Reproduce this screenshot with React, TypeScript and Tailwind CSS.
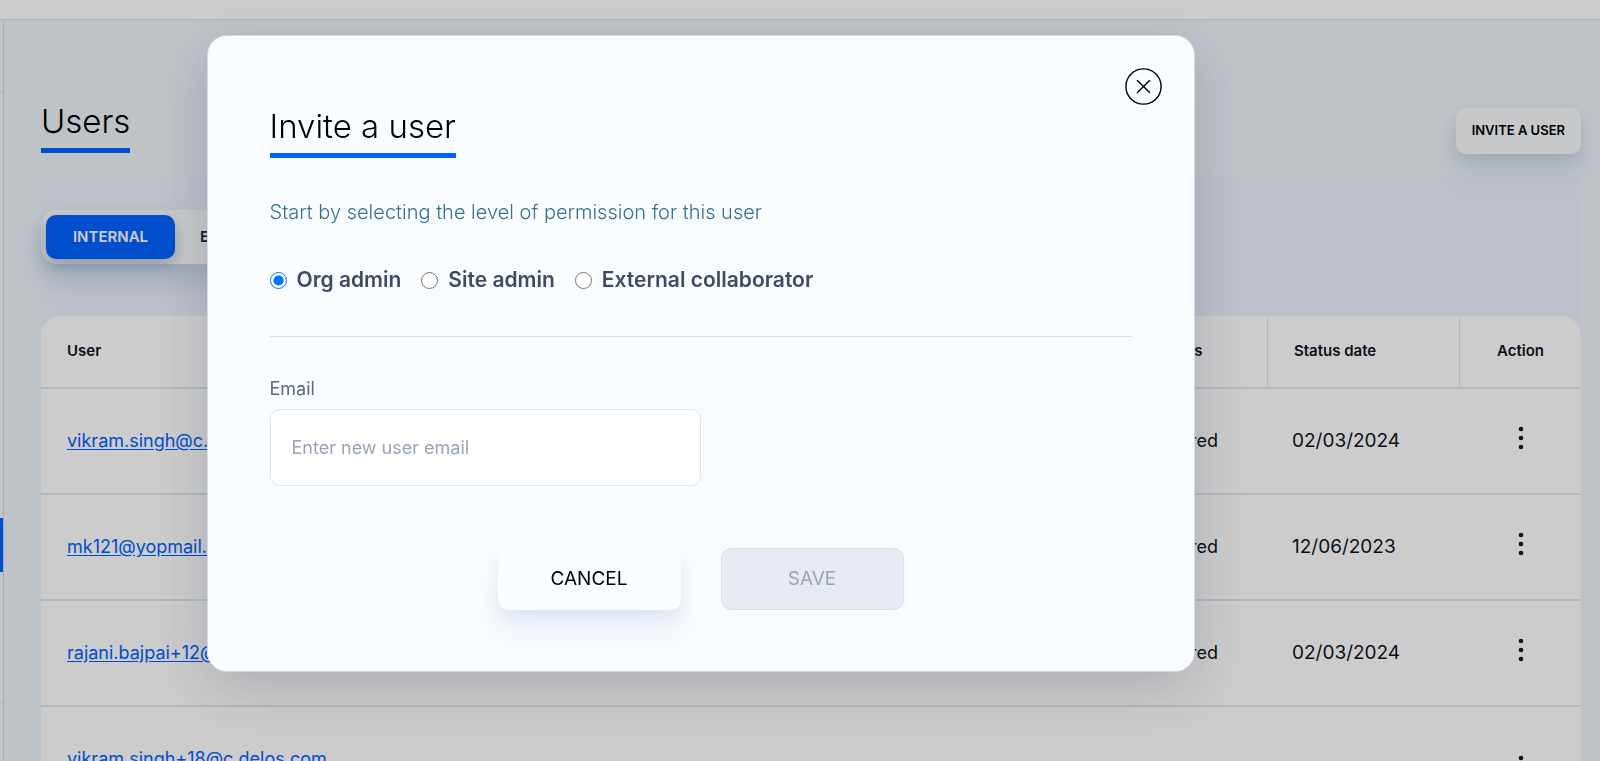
import { useState } from "react";

// Pending users have no status or date yet
const rows = [
  { email: "vikram.singh@c.delos.com", status: "Expired", date: "02/03/2024" },
  { email: "mk121@yopmail.com", status: "Expired", date: "12/06/2023" },
  { email: "rajani.bajpai+12@c.delos.com", status: "Expired", date: "02/03/2024" },
  { email: "vikram.singh+18@c.delos.com", status: "", date: "" },
];

const roles = ["Org admin", "Site admin", "External collaborator"];

function MoreIcon() {
  return (
    <svg width="6" height="24" viewBox="0 0 6 24" fill="currentColor">
      <circle cx="3" cy="3" r="2.3" />
      <circle cx="3" cy="12" r="2.3" />
      <circle cx="3" cy="21" r="2.3" />
    </svg>
  );
}

function Sidebar() {
  return (
    <aside className="flex w-1 shrink-0 flex-col border-r border-[#c8dcea] bg-[#f4f7fa]">
      <div className="h-[72px] border-b border-[#d5dfea] bg-[#eef5fa]" />
      <div className="h-[426px]" />
      <div className="h-[54px] bg-[#0062ff]" />
      <div className="h-[131px] border-b border-[#d5dfea]" />
    </aside>
  );
}

function UsersTable() {
  return (
    <table className="mt-[52px] w-full table-fixed border-separate border-spacing-0 overflow-hidden rounded-t-[20px] bg-white text-left text-[#10121f]">
      <colgroup>
        <col />
        <col className="w-[138px]" />
        <col className="w-[192px]" />
        <col className="w-[121px]" />
      </colgroup>
      <thead>
        <tr className="h-[73px] text-[15px]">
          <th className="border-b-2 border-[#dde6f0] px-[26px] font-semibold">User</th>
          <th className="border-r border-b-2 border-[#dde6f0] px-[26px] font-semibold">Status</th>
          <th className="border-r border-b-2 border-[#dde6f0] px-[26px] font-semibold">Status date</th>
          <th className="border-b-2 border-[#dde6f0] text-center font-semibold">Action</th>
        </tr>
      </thead>
      <tbody>
        {rows.map((row) => (
          <tr key={row.email} className="h-[106px] text-lg">
            <td className="border-b-2 border-[#dde6f0] px-[26px]">
              <a href="#" className="text-[#0062ff] underline underline-offset-2">
                {row.email}
              </a>
            </td>
            <td className="border-b-2 border-[#dde6f0] px-6">{row.status}</td>
            <td className="border-b-2 border-[#dde6f0] px-6 text-[19px]">{row.date}</td>
            <td className={row.status ? "border-b-2 border-[#dde6f0] pb-2 text-center" : "pt-3 text-center"}>
              <button aria-label="Actions" className="inline-flex align-middle">
                <MoreIcon />
              </button>
            </td>
          </tr>
        ))}
      </tbody>
    </table>
  );
}

function InviteModal() {
  const [role, setRole] = useState(roles[0]);
  const [email, setEmail] = useState("");

  return (
    <div className="fixed inset-0 flex items-start justify-center bg-black/20 pt-[35px] pr-[199px]">
      <div
        role="dialog"
        aria-labelledby="invite-title"
        className="relative w-full max-w-[988px] rounded-[20px] border border-[#cfdcec] bg-[#f9fcff] px-[62px] pt-[68px] pb-[61px] shadow-[0_16px_56px_rgba(30,35,60,0.18)]"
      >
        {/* Close */}
        <button aria-label="Close" className="absolute top-8 right-8 text-black">
          <svg width="37" height="37" viewBox="0 0 37 37" fill="none" stroke="currentColor" strokeWidth="1.4">
            <circle cx="18.5" cy="18.5" r="17.6" />
            <path d="M12.4 12.4l12.2 12.2M24.6 12.4L12.4 24.6" strokeLinecap="round" />
          </svg>
        </button>

        <h2
          id="invite-title"
          className="inline-block border-b-[5px] border-[#0062ff] pb-[5px] text-[33px] leading-[44px] font-light text-black"
        >
          Invite a user
        </h2>
        <p className="mt-10 text-xl leading-7 font-light text-[#39738f]">
          Start by selecting the level of permission for this user
        </p>

        {/* Roles */}
        <div className="mt-10 flex gap-5">
          {roles.map((item) => (
            <label key={item} className="flex items-center gap-[10px] text-[21px] leading-7 font-semibold text-[#414b66]">
              <input
                type="radio"
                name="role"
                checked={role === item}
                onChange={() => setRole(item)}
                className="size-[17px] accent-[#0075ff]"
              />
              {item}
            </label>
          ))}
        </div>

        <hr className="mt-[42px] border-[#d5e1ef]" />

        {/* Email */}
        <label htmlFor="email" className="mt-10 block text-lg leading-6 text-[#5d6884]">
          Email
        </label>
        <input
          id="email"
          type="email"
          value={email}
          onChange={(e) => setEmail(e.target.value)}
          placeholder="Enter new user email"
          className="mt-2 block h-[77px] w-1/2 rounded-[10px] border border-[#dfe5f0] bg-white px-[21px] text-lg text-[#414b66] placeholder:text-[#98a4b8]"
        />

        <div className="mt-[62px] flex justify-center gap-10">
          <button className="h-[62px] w-[183px] rounded-[10px] bg-[#fafdff] text-[19px] text-black shadow-[0_24px_32px_rgba(120,140,200,0.08),0_8px_14px_rgba(120,140,200,0.14)]">
            CANCEL
          </button>
          <button disabled className="h-[62px] w-[183px] rounded-[10px] border border-[#d5e1ec] bg-[#e6eaf3] text-[19px] text-[#9aa3b8]">
            SAVE
          </button>
        </div>
      </div>
    </div>
  );
}

export default function App() {
  return (
    <div className="flex h-screen flex-col overflow-hidden bg-[#eef4fa] font-[Inter,'Liberation_Sans',sans-serif]">
      <header className="h-5 shrink-0 border-b border-[#dfe6f2] bg-white" />
      <div className="flex min-h-0 flex-1">
        <Sidebar />
        <main className="flex-1 overflow-hidden pr-[19px] pl-[37px]">
          <div className="flex h-[155px] items-start justify-between pt-[79px]">
            <h1 className="border-b-[5px] border-[#0062ff] pb-[5px] text-[33px] leading-[44px] font-light text-black">
              Users
            </h1>
            <button className="relative mt-[9px] h-[46px] rounded-[10px] bg-[#f8fbfd] px-4 text-[13px] font-semibold text-black shadow-[0_20px_28px_rgba(120,150,190,0.14),0_6px_14px_rgba(100,130,170,0.18)]">
              INVITE A USER
            </button>
          </div>
          <section className="bg-[#ecf1fb] pt-[35px]">
            <div className="inline-flex rounded-2xl bg-[#f9fbfc] p-[5px] align-top text-[15px] font-semibold shadow-[0_16px_28px_rgba(100,130,170,0.26)]">
              <button className="h-11 w-[129px] rounded-[10px] bg-[#0062ff] text-white shadow-[0_6px_14px_rgba(60,90,140,0.35)]">
                INTERNAL
              </button>
              <button className="h-11 w-[129px] rounded-[10px] text-[#1c2440]">EXTERNAL</button>
            </div>
            <UsersTable />
          </section>
        </main>
      </div>
      <InviteModal />
    </div>
  );
}
